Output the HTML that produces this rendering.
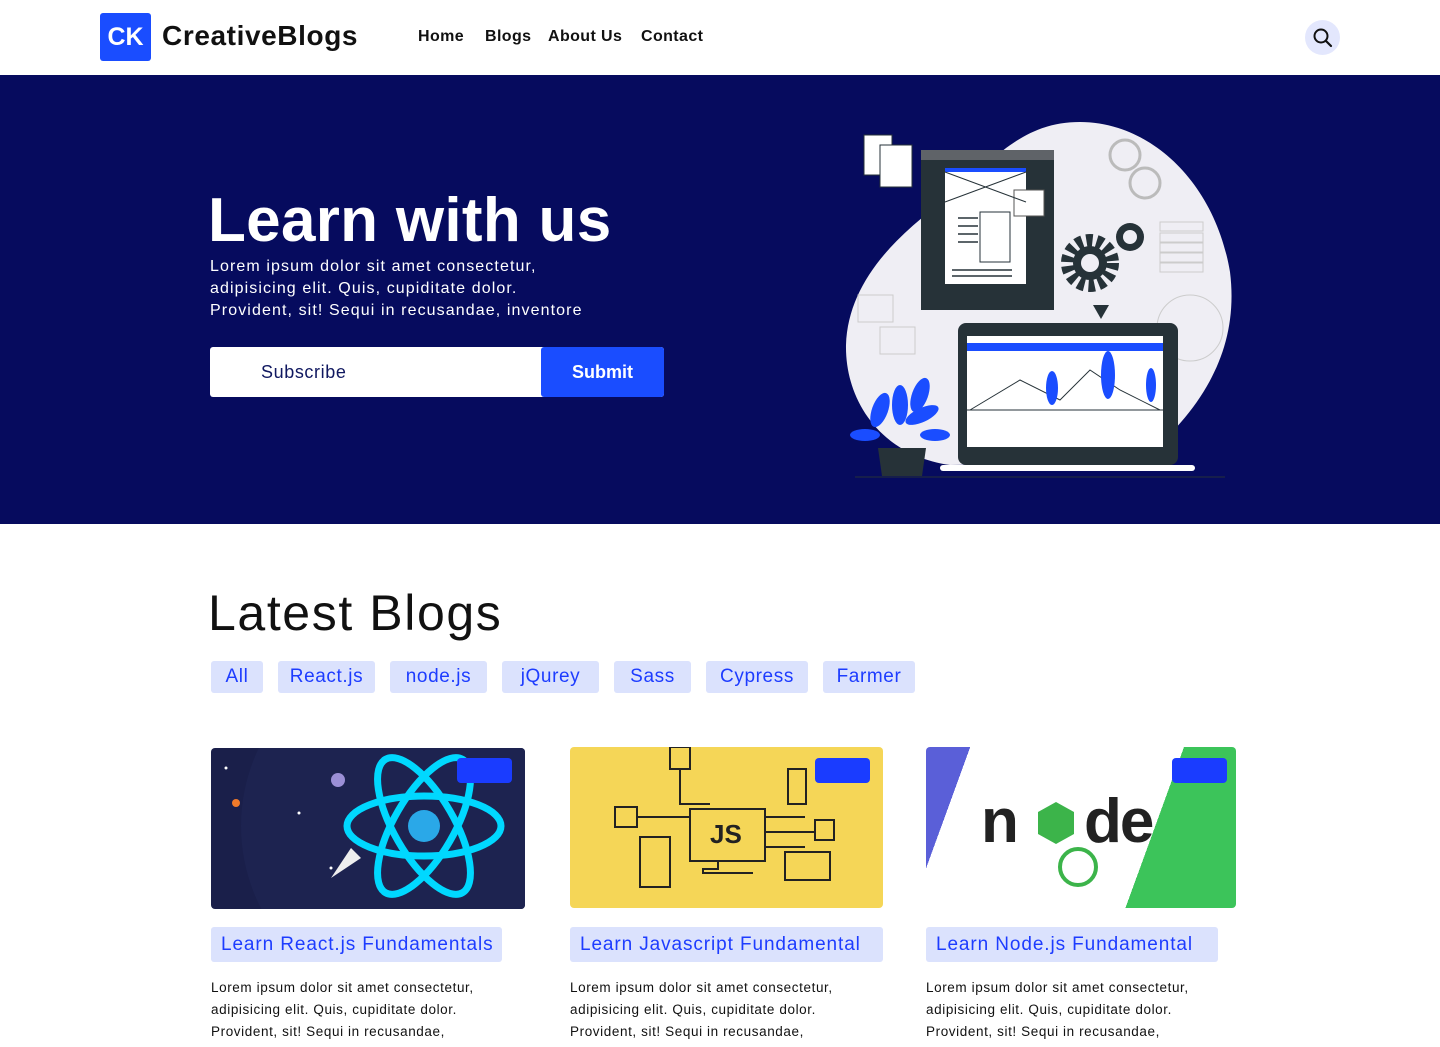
<!DOCTYPE html>
<html><head><meta charset="utf-8"><style>
*{margin:0;padding:0;box-sizing:border-box}
body{width:1440px;height:1047px;overflow:hidden;font-family:"Liberation Sans",sans-serif;background:#fff;position:relative}
.abs{position:absolute}
.nav a{position:absolute;top:28px;font-size:16px;font-weight:bold;color:#111;text-decoration:none;letter-spacing:0.4px}
.tag{position:absolute;top:661px;height:32px;background:#dbe2fd;border-radius:3px;color:#1d3cff;font-size:19px;line-height:32px;text-align:center;letter-spacing:0.6px}
.title{position:absolute;top:927px;height:35px;background:#dbe2fd;border-radius:3px;color:#1d3cff;font-size:19px;line-height:36px;padding-left:10px;letter-spacing:0.9px;white-space:nowrap}
.p{position:absolute;top:977px;font-size:13.5px;line-height:22px;color:#111;width:340px;letter-spacing:0.6px}
.badge{position:absolute;width:55px;height:25px;background:#1a3cff;border-radius:4px}
</style></head><body>
<div class="abs" style="left:100px;top:13px;width:51px;height:48px;background:#1a4dff;border-radius:3px;color:#fff;font-weight:bold;font-size:25px;line-height:48px;text-align:center">CK</div>
<div class="abs" style="left:162px;top:20px;font-size:28px;font-weight:bold;color:#111;letter-spacing:0.6px">CreativeBlogs</div>
<div class="nav"><a style="left:418px">Home</a><a style="left:485px">Blogs</a><a style="left:548px">About Us</a><a style="left:641px">Contact</a></div>
<div class="abs" style="left:1305px;top:20px;width:35px;height:35px;border-radius:50%;background:#e3e7fd"></div>
<svg class="abs" style="left:1312px;top:27px" width="22" height="22" viewBox="0 0 22 22"><circle cx="9" cy="9" r="6.5" fill="none" stroke="#111" stroke-width="2"/><path d="M14 14l5 5" stroke="#111" stroke-width="2.2" stroke-linecap="round"/></svg>

<div class="abs" style="left:0;top:75px;width:1440px;height:449px;background:#060b5e"></div>
<div class="abs" style="left:208px;top:185px;font-size:62px;font-weight:bold;color:#fff;letter-spacing:0.3px">Learn with us</div>
<div class="abs" style="left:210px;top:256px;font-size:16px;line-height:22px;color:#fff;letter-spacing:1.1px">Lorem ipsum dolor sit amet consectetur,<br>adipisicing elit. Quis, cupiditate dolor.<br>Provident, sit! Sequi in recusandae, inventore</div>
<div class="abs" style="left:210px;top:347px;width:454px;height:50px;background:#fff;border-radius:3px"></div>
<div class="abs" style="left:261px;top:362px;font-size:18px;color:#101860;letter-spacing:0.6px">Subscribe</div>
<div class="abs" style="left:541px;top:347px;width:123px;height:50px;background:#1a4dff;border-radius:3px;color:#fff;font-weight:bold;font-size:18px;line-height:50px;text-align:center">Submit</div>

<svg class="abs" style="left:840px;top:110px" width="400" height="380" viewBox="0 0 400 380">
<path d="M240 12c70 0 135 60 150 150 10 80-30 140-90 190L110 355C40 345 5 290 6 235 8 170 60 120 120 80 160 40 190 12 240 12z" fill="#efeef4"/>
<rect x="24" y="25" width="28" height="40" fill="#fff" stroke="#263238"/><rect x="40" y="35" width="32" height="42" fill="#fff" stroke="#263238"/>
<rect x="81" y="40" width="133" height="160" fill="#263238"/><rect x="81" y="40" width="133" height="10" fill="#5f6368"/>
<rect x="105" y="58" width="81" height="116" fill="#fff"/><rect x="105" y="58" width="81" height="4" fill="#1a4dff"/>
<rect x="174" y="80" width="30" height="26" fill="#fff" stroke="#555"/>
<path d="M105 62l81 30M186 62l-81 30" stroke="#263238"/>
<g stroke="#263238" stroke-width="1.5"><path d="M118 108h20M118 116h20M118 124h20M118 132h20M112 160h60M112 166h60"/></g>
<rect x="140" y="102" width="30" height="50" fill="none" stroke="#263238"/>
<circle cx="250" cy="153" r="22" fill="none" stroke="#263238" stroke-width="14" stroke-dasharray="6 4"/><circle cx="250" cy="153" r="17" fill="#263238"/><circle cx="250" cy="153" r="9" fill="#efeef4"/>
<circle cx="290" cy="127" r="14" fill="#263238"/><circle cx="290" cy="127" r="7" fill="#efeef4"/>
<circle cx="285" cy="45" r="15" fill="none" stroke="#bbb" stroke-width="3"/><circle cx="305" cy="73" r="15" fill="none" stroke="#bbb" stroke-width="3"/>
<g fill="none" stroke="#ccc"><rect x="320" y="112" width="43" height="9"/><rect x="320" y="123" width="43" height="9"/><rect x="320" y="133" width="43" height="9"/><rect x="320" y="143" width="43" height="9"/><rect x="320" y="153" width="43" height="9"/><circle cx="350" cy="218" r="33"/><rect x="18" y="185" width="35" height="27"/><rect x="40" y="217" width="35" height="27"/></g>
<path d="M253 195l8 14 8-14z" fill="#263238"/>
<rect x="118" y="213" width="220" height="142" rx="8" fill="#263238"/>
<rect x="127" y="226" width="196" height="111" fill="#fff"/><rect x="127" y="233" width="196" height="8" fill="#1a4dff"/>
<path d="M127 300h196" stroke="#263238"/>
<path d="M130 300l50-30 40 20 30-30 30 20 40 20" fill="none" stroke="#263238"/>
<ellipse cx="212" cy="278" rx="6" ry="17" fill="#1a4dff"/><ellipse cx="268" cy="265" rx="7" ry="24" fill="#1a4dff"/><ellipse cx="311" cy="275" rx="5" ry="17" fill="#1a4dff"/>
<rect x="100" y="355" width="255" height="6" rx="3" fill="#fff"/>
<ellipse cx="40" cy="300" rx="8" ry="18" fill="#1a4dff" transform="rotate(20 40 300)"/><ellipse cx="60" cy="295" rx="8" ry="20" fill="#1a4dff"/><ellipse cx="80" cy="285" rx="8" ry="18" fill="#1a4dff" transform="rotate(20 80 285)"/><ellipse cx="82" cy="305" rx="18" ry="7" fill="#1a4dff" transform="rotate(-25 82 305)"/><ellipse cx="25" cy="325" rx="15" ry="6" fill="#1a4dff"/><ellipse cx="95" cy="325" rx="15" ry="6" fill="#1a4dff"/>
<path d="M38 338h48l-4 28H42z" fill="#263238"/>
<path d="M15 367h370" stroke="#263238"/>
</svg>

<div class="abs" style="left:208px;top:584px;font-size:50px;color:#111;letter-spacing:1.6px">Latest Blogs</div>
<div class="tag" style="left:211px;width:52px">All</div>
<div class="tag" style="left:278px;width:97px">React.js</div>
<div class="tag" style="left:390px;width:97px">node.js</div>
<div class="tag" style="left:502px;width:97px">jQurey</div>
<div class="tag" style="left:614px;width:77px">Sass</div>
<div class="tag" style="left:706px;width:102px">Cypress</div>
<div class="tag" style="left:823px;width:92px">Farmer</div>

<div class="abs" style="left:211px;top:748px;width:314px;height:161px;background:#1a1f4a;border-radius:4px;overflow:hidden">
<svg width="314" height="161"><circle cx="210" cy="78" r="180" fill="#1d2350"/><g fill="none" stroke="#00d8ff" stroke-width="7"><ellipse cx="213" cy="78" rx="77" ry="30"/><ellipse cx="213" cy="78" rx="77" ry="30" transform="rotate(60 213 78)"/><ellipse cx="213" cy="78" rx="77" ry="30" transform="rotate(-60 213 78)"/></g><circle cx="213" cy="78" r="16" fill="#2aa8e8"/><path d="M120 130l20-30 10 10z" fill="#eee"/><circle cx="15" cy="20" r="1.5" fill="#fff"/><circle cx="88" cy="65" r="1.5" fill="#fff"/><circle cx="120" cy="120" r="1.5" fill="#fff"/><circle cx="25" cy="55" r="4" fill="#f07a2a"/><circle cx="127" cy="32" r="7" fill="#9b8fd6"/></svg></div>
<div class="badge" style="left:457px;top:758px"></div>
<div class="abs" style="left:570px;top:747px;width:313px;height:161px;background:#f5d657;border-radius:4px">
<svg width="313" height="161"><g fill="none" stroke="#222" stroke-width="2"><rect x="120" y="62" width="75" height="52"/><rect x="100" y="0" width="20" height="22"/><path d="M110 22v35h30"/><rect x="218" y="22" width="18" height="35"/><rect x="45" y="60" width="22" height="20"/><path d="M67 70h53M195 70h40M195 85h50M195 100h40"/><rect x="70" y="90" width="30" height="50"/><rect x="245" y="73" width="19" height="20"/><rect x="215" y="105" width="45" height="28"/><path d="M148 114v8h-15v4h50"/></g><text x="140" y="96" font-size="26" font-weight="bold" font-family="Liberation Sans" fill="#222">JS</text></svg></div>
<div class="badge" style="left:815px;top:758px"></div>
<div class="abs" style="left:926px;top:747px;width:310px;height:161px;background:linear-gradient(110deg,#5a5fd8 0 12%,#fff 12% 70%,#3cc45a 70%);border-radius:4px">
<svg width="310" height="161"><text x="55" y="95" font-size="62" font-weight="bold" font-family="Liberation Sans" fill="#222" letter-spacing="-2">n</text><path d="M130 55l-18 10v22l18 10 18-10v-22z" fill="#3cb44a"/><text x="158" y="95" font-size="62" font-weight="bold" font-family="Liberation Sans" fill="#222" letter-spacing="-2">de</text><circle cx="152" cy="120" r="18" fill="none" stroke="#3cb44a" stroke-width="4"/></svg></div>
<div class="badge" style="left:1172px;top:758px"></div>

<div class="title" style="left:211px;width:291px">Learn React.js Fundamentals</div>
<div class="title" style="left:570px;width:313px">Learn Javascript Fundamental</div>
<div class="title" style="left:926px;width:292px">Learn Node.js Fundamental</div>
<div class="p" style="left:211px">Lorem ipsum dolor sit amet consectetur,<br>adipisicing elit. Quis, cupiditate dolor.<br>Provident, sit! Sequi in recusandae,</div>
<div class="p" style="left:570px">Lorem ipsum dolor sit amet consectetur,<br>adipisicing elit. Quis, cupiditate dolor.<br>Provident, sit! Sequi in recusandae,</div>
<div class="p" style="left:926px">Lorem ipsum dolor sit amet consectetur,<br>adipisicing elit. Quis, cupiditate dolor.<br>Provident, sit! Sequi in recusandae,</div>
</body></html>
